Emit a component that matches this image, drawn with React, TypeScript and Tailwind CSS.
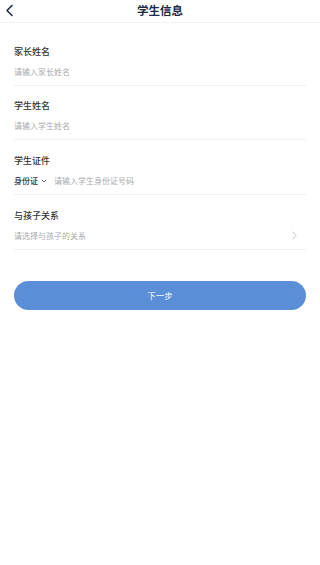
import React from 'react';

const font = { fontFamily: '"Noto Sans CJK SC", "Noto Sans", sans-serif' };

const Field: React.FC<{ label: string; children: React.ReactNode }> = ({ label, children }) => (
  <div className="pt-[13.7px] pb-[6px] border-b border-[#efefef] flex flex-col gap-[6px]">
    <div className="h-[14px] leading-[14px] text-[9px] text-[#333] font-medium">{label}</div>
    <div className="h-[14px] leading-[14px] text-[8px] flex items-center">{children}</div>
  </div>
);

const App: React.FC = () => {
  return (
    <div className="w-[320px] h-[565px] bg-white" style={font}>
      {/* Header */}
      <header className="relative h-[23px] border-b border-[#f2f2f2] flex items-center justify-center">
        <svg className="absolute left-[5px] top-[4px]" width="9" height="13" viewBox="0 0 9 13" fill="none">
          <path d="M7 1.5L2 6.5L7 11.5" stroke="#1c2a4a" strokeWidth="1.6" strokeLinecap="round" strokeLinejoin="round" />
        </svg>
        <h1 className="text-[11.5px] font-bold text-[#1c2a4a] leading-[20px] -mt-[2px]">学生信息</h1>
      </header>

      <main className="px-[14px] pt-[8px]">
        <Field label="家长姓名">
          <span className="text-[#aaa]">请输入家长姓名</span>
        </Field>
        <Field label="学生姓名">
          <span className="text-[#aaa]">请输入学生姓名</span>
        </Field>
        <Field label="学生证件">
          <span className="text-[#333] font-medium">身份证</span>
          <svg className="ml-[3px]" width="6" height="4" viewBox="0 0 6 4" fill="none">
            <path d="M0.8 0.8L3 3L5.2 0.8" stroke="#555" strokeWidth="0.9" />
          </svg>
          <span className="ml-[7px] text-[#aaa]">请输入学生身份证号码</span>
        </Field>
        <Field label="与孩子关系">
          <span className="text-[#aaa] flex-1">请选择与孩子的关系</span>
          <svg className="mr-[9px]" width="5" height="9" viewBox="0 0 5 9" fill="none">
            <path d="M0.7 0.7L4 4.5L0.7 8.3" stroke="#bbb" strokeWidth="0.9" />
          </svg>
        </Field>

        <button className="mt-[31px] w-full h-[29px] rounded-full bg-[#5a8fd8] text-white text-[8.5px] flex items-center justify-center">
          下一步
        </button>
      </main>
    </div>
  );
};

export default App;
